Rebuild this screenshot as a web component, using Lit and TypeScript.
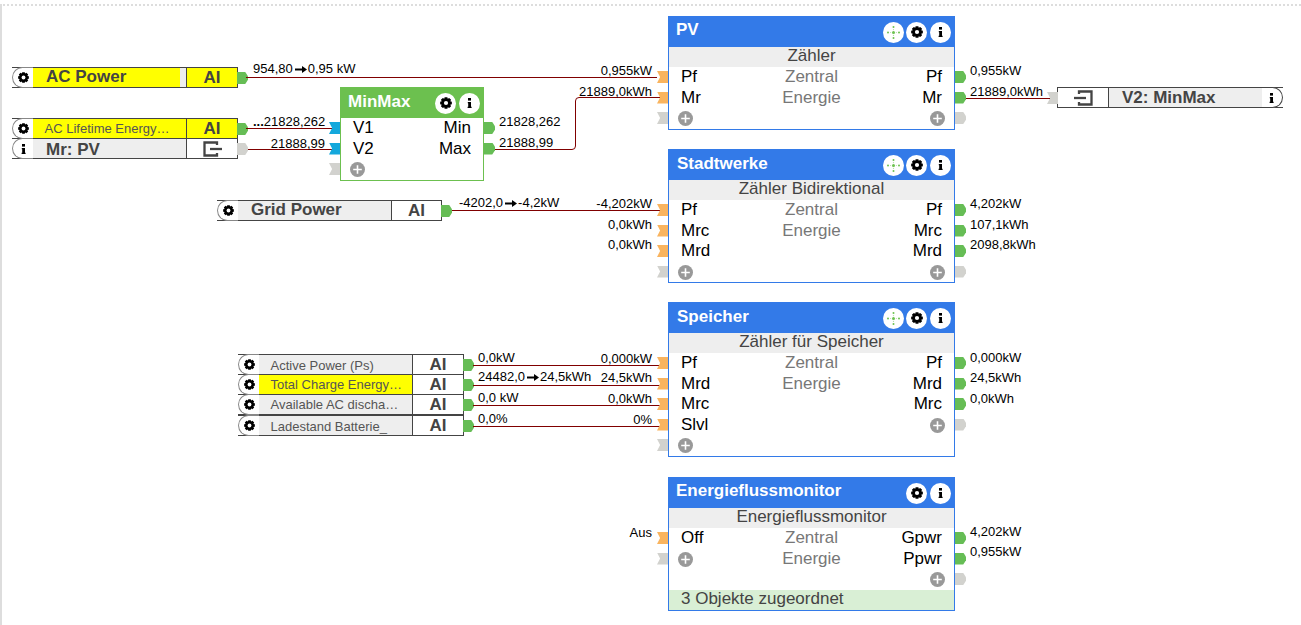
import { LitElement, html, svg, css, nothing } from "lit";
import { customElement } from "lit/decorators.js";

const gearPath = (() => {
  const pts: string[] = [];
  const teeth = 8;
  for (let i = 0; i < teeth; i++) {
    const a = (i / teeth) * Math.PI * 2;
    const w = 0.27;
    const pairs: [number, number][] = [
      [a - w - 0.12, 4.6],
      [a - w + 0.04, 6],
      [a + w - 0.04, 6],
      [a + w + 0.12, 4.6],
    ];
    for (const [ang, r] of pairs) {
      pts.push(`${(6 + r * Math.cos(ang)).toFixed(2)} ${(6 + r * Math.sin(ang)).toFixed(2)}`);
    }
  }
  return "M" + pts.join("L") + "Z";
})();

const gear = (s = 12) => html`<svg width=${s} height=${s} viewBox="0 0 12 12"><path d=${gearPath} fill="#000"></path><circle cx="6" cy="6" r="2.1" fill="#fff"></circle></svg>`;
const info = (h = 10) => html`<svg width="5" height=${h} viewBox="0 0 5 10"><rect x="1" y="0" width="3" height="2.6" fill="#000"></rect><path d="M0.8 4H4V8.8H4.6V10H0.6V8.8H1.2V5.2H0.8Z" fill="#000"></path></svg>`;
const move = () => html`<svg width="15" height="15" viewBox="0 0 15 15" fill="#6cc24f"><circle cx="7.5" cy="7.5" r="1.5"></circle><circle cx="7.5" cy="2" r="1"></circle><circle cx="7.5" cy="13" r="1"></circle><circle cx="2" cy="7.5" r="1"></circle><circle cx="13" cy="7.5" r="1"></circle><g opacity=".5"><circle cx="7.5" cy="4.6" r=".6"></circle><circle cx="7.5" cy="10.4" r=".6"></circle><circle cx="4.6" cy="7.5" r=".6"></circle><circle cx="10.4" cy="7.5" r=".6"></circle></g></svg>`;
const plus = () => html`<svg class="plus" width="15" height="15" viewBox="0 0 15 15"><circle cx="7.5" cy="7.5" r="7.5" fill="#999"></circle><path d="M7.5 3.2V11.8M3.2 7.5H11.8" stroke="#fff" stroke-width="1.6"></path></svg>`;
const arrow = () => html`<svg class="arrow" width="12" height="9" viewBox="0 0 12 9"><path d="M0 4.5H8" stroke="#000" stroke-width="2"></path><path d="M7 1L12 4.5L7 8Z" fill="#000"></path></svg>`;
const outIcon = () => html`<svg width="19" height="16" viewBox="0 0 19 16" fill="none" stroke="#444" stroke-width="2.3"><path d="M14 4V1.5H1.5V14.5H14V12"></path><path d="M7 8H19"></path></svg>`;
const inIcon = () => html`<svg width="19" height="16" viewBox="0 0 19 16" fill="none" stroke="#444" stroke-width="2.3"><path d="M5 4V1.5H17.5V14.5H5V12"></path><path d="M0 8H12"></path></svg>`;

interface Row { l?: string; c?: string; r?: string; }
interface Block {
  x: number; y: number; w: number; title: string; band?: string; tone: string; inTone: string;
  moveBtn?: boolean; rows: Row[]; foot?: string; nudge?: boolean;
}
const P = "+";
const blocks: Block[] = [
  { x: 668, y: 16, w: 287, title: "PV", band: "Zähler", tone: "blue", inTone: "orange", moveBtn: true,
    rows: [{ l: "Pf", c: "Zentral", r: "Pf" }, { l: "Mr", c: "Energie", r: "Mr" }, { l: P, r: P }] },
  { x: 668, y: 149, w: 287, title: "Stadtwerke", nudge: true, band: "Zähler Bidirektional", tone: "blue", inTone: "orange", moveBtn: true,
    rows: [{ l: "Pf", c: "Zentral", r: "Pf" }, { l: "Mrc", c: "Energie", r: "Mrc" }, { l: "Mrd", r: "Mrd" }, { l: P, r: P }] },
  { x: 668, y: 302, w: 287, title: "Speicher", nudge: true, band: "Zähler für Speicher", tone: "blue", inTone: "orange", moveBtn: true,
    rows: [{ l: "Pf", c: "Zentral", r: "Pf" }, { l: "Mrd", c: "Energie", r: "Mrd" }, { l: "Mrc", r: "Mrc" }, { l: "Slvl", r: P }, { l: P }] },
  { x: 668, y: 477, w: 287, title: "Energieflussmonitor", band: "Energieflussmonitor", tone: "blue", inTone: "orange",
    rows: [{ l: "Off", c: "Zentral", r: "Gpwr" }, { l: P, c: "Energie", r: "Ppwr" }, { r: P }], foot: "3 Objekte zugeordnet" },
  { x: 340, y: 87, w: 144, title: "MinMax", nudge: true, tone: "green", inTone: "cyan",
    rows: [{ l: "V1", r: "Min" }, { l: "V2", r: "Max" }, { l: P }] },
];

interface Pill {
  x: number; y: number; w: number; name: string; lh: number; small?: boolean; yellow?: boolean; sliver?: boolean;
  typeW: number; typeYellow?: boolean; icon?: "gear" | "info"; type?: string; typeIcon?: "out" | "in";
  reverse?: boolean; port?: "green" | "gray";
}
const pills: Pill[] = [
  { x: 12, y: 67, w: 226, name: "AC Power", lh: 18, yellow: true, sliver: true, typeW: 51, typeYellow: true, icon: "gear", type: "AI", port: "green" },
  { x: 12, y: 118, w: 226, name: "AC Lifetime Energy…", lh: 19, small: true, yellow: true, typeW: 51, typeYellow: true, icon: "gear", type: "AI", port: "green" },
  { x: 12, y: 138, w: 226, name: "Mr: PV", lh: 22, typeW: 51, icon: "info", typeIcon: "out", port: "gray" },
  { x: 217, y: 200, w: 225, name: "Grid Power", lh: 18, typeW: 50, icon: "gear", type: "AI", port: "green" },
  { x: 238, y: 354, w: 226, name: "Active Power (Ps)", lh: 21, small: true, typeW: 51, icon: "gear", type: "AI", port: "green" },
  { x: 238, y: 374, w: 226, name: "Total Charge Energy…", lh: 19, small: true, yellow: true, typeW: 51, icon: "gear", type: "AI", port: "green" },
  { x: 238, y: 394, w: 226, name: "Available AC discha…", lh: 19, small: true, typeW: 51, icon: "gear", type: "AI", port: "green" },
  { x: 238, y: 415, w: 226, name: "Ladestand Batterie_", lh: 21, small: true, typeW: 51, icon: "gear", type: "AI", port: "green" },
  { x: 1057, y: 87, w: 226, name: "V2: MinMax", lh: 19, typeW: 51, icon: "info", typeIcon: "in", reverse: true, port: "gray" },
];

const wires = [
  "M246 77.5H657", "M246 128.5H334", "M248 149.5H334",
  "M495 149.5H572Q575.5 149.5 575.5 146V101Q575.5 97.5 579 97.5H660",
  "M452 210.5H660", "M473 365.5H660", "M473 385.5H660", "M473 405.5H660", "M473 426.5H660",
  "M966 98.5H1050",
];

type Lab = [number, number, any, boolean?];
const labels: Lab[] = [
  [253, 69, html`954,80${arrow()}0,95 kW`], [652, 71, "0,955kW", true], [652, 92, "21889,0kWh", true],
  [253, 122, html`<b>...</b>21828,262`], [325, 144, "21888,99", true],
  [499, 122, "21828,262"], [499, 143, "21888,99"],
  [970, 71, "0,955kW"], [970, 92, "21889,0kWh"],
  [459, 203, html`-4202,0${arrow()}-4,2kW`], [652, 204, "-4,202kW", true], [652, 225, "0,0kWh", true], [652, 245, "0,0kWh", true],
  [970, 204, "4,202kW"], [970, 225, "107,1kWh"], [970, 245, "2098,8kWh"],
  [478, 358, "0,0kW"], [652, 359, "0,000kW", true],
  [478, 377, html`24482,0${arrow()}24,5kWh`], [652, 378, "24,5kWh", true],
  [478, 398, "0,0 kW"], [652, 399, "0,0kWh", true],
  [478, 419, "0,0%"], [652, 420, "0%", true],
  [970, 358, "0,000kW"], [970, 378, "24,5kWh"], [970, 399, "0,0kWh"],
  [652, 533, "Aus", true], [970, 532, "4,202kW"], [970, 552, "0,955kW"],
];

@customElement("app-root")
export class AppRoot extends LitElement {
  static styles = css`
    :host { display: block; position: relative; width: 1301px; height: 625px; overflow: hidden; background: #fff;
      font-family: "Liberation Sans", Arial, sans-serif; color: #000; }
    .frame { box-sizing: border-box; height: 621px; margin-top: 4px; border-top: 2px dotted #ddd; border-left: 2px solid #ddd; }
    .wires { position: absolute; left: 0; top: 0; }
    .wires path { fill: none; stroke: #800000; stroke-width: 1; }

    .block { position: absolute; box-sizing: border-box; border: 1px solid; background: #fff; }
    .block.blue { border-color: #337ae8; }
    .block.green { border-color: #6cc04f; }
    .head { display: flex; align-items: center; justify-content: flex-end; height: 30px; position: relative; padding-right: 3.5px; gap: 2.5px; }
    .blue .head { background: #337ae8; }
    .green .head { background: #6cc04f; }
    .title { margin-right: auto; align-self: flex-start; padding: 3px 0 0 7px; font: bold 17px/20px "Liberation Sans", Arial, sans-serif; color: #fff; }
    .title.nudge { padding: 4px 0 0 8px; }
    .green .title.nudge { padding-left: 7px; }
    .btn { width: 21px; height: 21px; border-radius: 50%; background: #fff; display: flex; align-items: center; justify-content: center; }
    .band { height: 20px; background: #eee; color: #444; font-size: 17px; line-height: 18px; text-align: center; }
    .row { position: relative; height: 20.5px; display: grid; grid-template-columns: 1fr auto 1fr; align-items: start; padding: 0 12px; font-size: 17px; line-height: 19px; }
    .row .c { color: #777; }
    .row .r { text-align: right; }
    .plus { display: block; margin: 3px -3px 0; }
    .row .r .plus { margin-left: auto; }
    .port { position: absolute; width: 11px; height: 12px; top: 4px; }
    .port.in { left: -12px; clip-path: polygon(0 0, 100% 0, 100% 100%, 0 100%, 28% 50%); }
    .port.out { right: -12px; clip-path: polygon(0 0, 75% 0, 100% 35%, 100% 65%, 75% 100%, 0 100%); }
    .orange { background: #f9b45f; }
    .cyan { background: #14a8dc; }
    .gray { background: #d2d2ce; }
    .gr { background: #66bd55; }
    .foot { height: 20px; background: #d9efd5; color: #444; font-size: 17px; line-height: 18px; padding-left: 12px; }

    .pill { position: absolute; box-sizing: border-box; height: 21px; display: flex; background: #fff; border: 1px solid #444; border-left: 0; }
    .pill.rev { flex-direction: row-reverse; border-left: 1px solid #444; border-right: 0; }
    .ico { box-sizing: border-box; width: 21px; flex: none; display: flex; align-items: center; justify-content: center; border: 1px solid #888; border-right: 0; margin: -1px 0; border-radius: 11px 0 0 11px; background: #fff; padding-left: 1px; }
    .rev .ico { border: 1px solid #444; border-left: 0; border-radius: 0 11px 11px 0; padding: 0 1px 0 0; }
    .name { flex: 1; min-width: 0; background: #eee; color: #444; font-weight: bold; font-size: 17px; padding-left: 13px; white-space: nowrap; }
    .name.small { font-weight: normal; font-size: 13px; padding-left: 11.5px; color: #555; }
    .name.yellow { background: #ff0; }
    .sliver { box-shadow: inset -6px 0 0 #eee; }
    .type { box-sizing: border-box; flex: none; display: flex; align-items: center; justify-content: center; border-left: 1px solid #444; color: #444; font-weight: bold; font-size: 17px; line-height: 18px; background: #fff; }
    .rev .type { border-left: 0; border-right: 1px solid #444; }
    .type.yellow { background: #ff0; }
    .pport { position: absolute; left: 100%; top: 4px; width: 11px; height: 12px; clip-path: polygon(0 0, 75% 0, 100% 35%, 100% 65%, 75% 100%, 0 100%); }
    .rev .pport { left: -11px; clip-path: polygon(0 0, 100% 0, 100% 100%, 0 100%, 28% 50%); }

    .lab { position: absolute; font-size: 13px; line-height: 14px; white-space: nowrap; display: flex; align-items: center; }
    .lab b { font-weight: bold; }
    .arrow { margin: 0 1px 0 2px; }
  `;

  private port(kind: "in" | "out", val: string | undefined, tone: string) {
    if (!val) return nothing;
    const cls = val === P ? "gray" : kind === "in" ? tone : "gr";
    return html`<span class="port ${kind} ${cls}"></span>`;
  }

  private block(b: Block) {
    const cell = (v?: string) => (v === P ? plus() : v ?? "");
    return html`<div class="block ${b.tone}" style="left:${b.x}px;top:${b.y}px;width:${b.w}px">
      <div class="head">
        <span class="title ${b.nudge ? "nudge" : ""}">${b.title}</span>
        ${b.moveBtn ? html`<span class="btn">${move()}</span>` : nothing}
        <span class="btn">${gear()}</span>
        <span class="btn">${info()}</span>
      </div>
      ${b.band ? html`<div class="band">${b.band}</div>` : nothing}
      ${b.rows.map((r) => html`<div class="row">
        ${this.port("in", r.l, b.inTone)}
        <span class="l">${cell(r.l)}</span>
        <span class="c">${r.c ?? ""}</span>
        <span class="r">${cell(r.r)}</span>
        ${this.port("out", r.r, b.inTone)}
      </div>`)}
      ${b.foot ? html`<div class="foot">${b.foot}</div>` : nothing}
    </div>`;
  }

  private pill(p: Pill) {
    return html`<div class="pill ${p.reverse ? "rev" : ""}" style="left:${p.x}px;top:${p.y}px;width:${p.w}px">
      <span class="ico">${p.icon === "gear" ? gear(11) : info()}</span>
      <span class="name ${p.small ? "small" : ""} ${p.yellow ? "yellow" : ""} ${p.sliver ? "sliver" : ""}" style="line-height:${p.lh}px">${p.name}</span>
      <span class="type ${p.typeYellow ? "yellow" : ""}" style="width:${p.typeW}px">${p.typeIcon === "out" ? outIcon() : p.typeIcon === "in" ? inIcon() : p.type}</span>
      ${p.port ? html`<span class="pport ${p.port === "green" ? "gr" : "gray"}"></span>` : nothing}
    </div>`;
  }

  render() {
    return html`<div class="frame"></div>
      ${pills.map((p) => this.pill(p))}
      <svg class="wires" width="1301" height="625">${wires.map((d) => svg`<path d=${d}></path>`)}</svg>
      ${blocks.map((b) => this.block(b))}
      ${labels.map(([x, y, t, right]) => html`<div class="lab" style="${right ? `right:${1301 - x}px` : `left:${x}px`};top:${y - 7}px">${t}</div>`)}`;
  }
}
